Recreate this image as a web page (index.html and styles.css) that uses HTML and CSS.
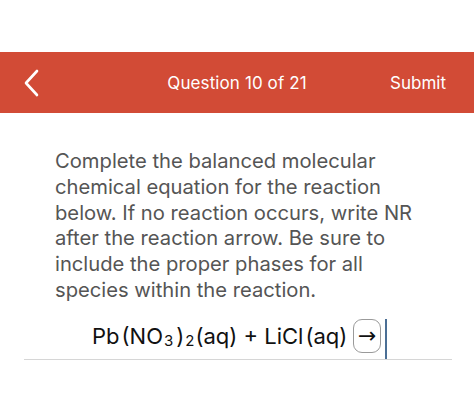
FILE: index.html
```html
<!DOCTYPE html>
<html>
<head>
<meta charset="utf-8">
<link rel="stylesheet" href="styles.css">
</head>
<body>
<div class="page">
  <header class="bar">
    <div class="back">
      <svg width="16" height="28" viewBox="0 0 16 28"><path d="M14 2 L3 14 L14 26" fill="none" stroke="#fff" stroke-width="2.6" stroke-linecap="round" stroke-linejoin="round"/></svg>
    </div>
    <div class="title">Question 10 of 21</div>
    <div class="submit">Submit</div>
  </header>
  <main class="content">
    <p class="question">Complete the balanced molecular chemical equation for the reaction below. If no reaction occurs, write NR after the reaction arrow. Be sure to include the proper phases for all species within the reaction.</p>
    <div class="answer">
      <span class="eq">Pb<span class="p">(</span>NO<span class="sub">3</span><span class="p">)</span><span class="sub">2</span>(aq) + LiCl<span class="p">(</span>aq)</span>
      <span class="arrow">→</span>
      <span class="cursor"></span>
    </div>
  </main>
</div>
</body>
</html>
```
FILE: styles.css
```css
html, body {
  margin: 0;
  padding: 0;
  background: #fff;
}
body {
  font-family: Inter, "Liberation Sans", sans-serif;
  color: #222;
}
.page {
  padding-top: 52px;
}
.bar {
  height: 61px;
  background: #d24b36;
  display: grid;
  grid-template-columns: 1fr auto 1fr;
  align-items: center;
  color: #fff;
}
.back {
  padding-left: 23px;
  display: flex;
  align-items: center;
}
.title {
  font-size: 17px;
  letter-spacing: 0.1px;
}
.submit {
  justify-self: end;
  padding-right: 28px;
  font-size: 17px;
}
.content {
  padding: 0 22px 0 24px;
}
.question {
  margin: 35px 0 0 31px;
  width: 365px;
  font-size: 20.2px;
  line-height: 25.8px;
  color: #555;
}
.answer {
  margin-top: 10px;
  display: flex;
  align-items: center;
  height: 46px;
  padding-left: 68px;
  border-bottom: 1px solid #d6d6d6;
}
.eq {
  font-size: 22px;
  color: #111;
  white-space: nowrap;
}
.eq .p {
  margin-left: 2px;
}
.eq .sub {
  font-size: 15px;
  position: relative;
  top: 2px;
  margin: 0 1px;
}
.arrow {
  margin-left: 6px;
  width: 28px;
  height: 34px;
  box-sizing: border-box;
  border: 1px solid #9a9a9a;
  border-radius: 9px;
  display: flex;
  align-items: center;
  justify-content: center;
  font-size: 22px;
  color: #111;
  font-family: "DejaVu Sans", sans-serif;
}
.cursor {
  margin-left: 4px;
  width: 2px;
  height: 40px;
  align-self: flex-end;
  background: #4b6f95;
}
```
